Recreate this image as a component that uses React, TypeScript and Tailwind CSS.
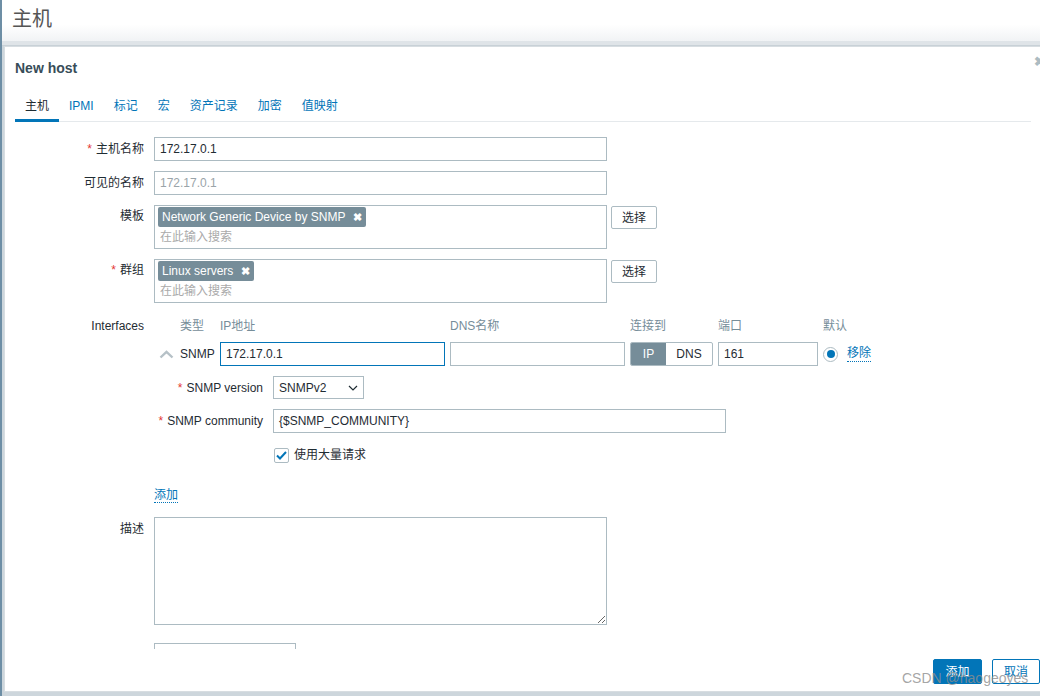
import React from "react";

const font = "font-['Liberation_Sans','Noto_Sans_CJK_SC',sans-serif]";

function Req() {
  return <span className="text-[#e33734] mr-[4px]">*</span>;
}

function Tag({ text }: { text: string }) {
  return (
    <span className="inline-flex items-center h-[20px] px-[4px] rounded-[2px] bg-[#768d99] text-white text-[12px]">
      {text}
      <span className="ml-[8px] text-[11px] font-bold">✖</span>
    </span>
  );
}

function MultiSelect({ tag }: { tag: string }) {
  return (
    <div className="flex items-start gap-[4px]">
      <div className="w-[453px] h-[44px] border border-[#acbbc2] bg-white px-[3px] pt-[1px]">
        <Tag text={tag} />
        <div className="pl-[2px] mt-[2px] leading-[16px] text-[#aaaaaa]">在此输入搜索</div>
      </div>
      <button className="h-[23px] px-[10px] mt-[1px] border border-[#acbbc2] rounded-[2px] bg-white text-[#1f2c33]">
        选择
      </button>
    </div>
  );
}

export default function App() {
  const tabs = ["主机", "IPMI", "标记", "宏", "资产记录", "加密", "值映射"];

  return (
    <div className={`${font} text-[12px] text-[#1f2c33] w-[1040px] h-[696px] overflow-hidden relative bg-[#cdd6dc] border-l-2 border-[#6d8ea5]`}>
      {/* page header */}
      <div className="h-[41px] bg-gradient-to-b from-white from-60% to-[#f1f3f5] pl-[10px] pt-[6px]">
        <h1 className="text-[20px] leading-[26px] text-[#555555] font-normal">主机</h1>
      </div>
      <div className="h-[5px] bg-[#dfe4e8] border-b border-[#c8d1d7]" />

      {/* modal */}
      <div className="ml-[2px] w-[1050px] h-[646px] bg-white border border-[#d7dde1] relative flex flex-col">
        <span className="absolute left-[1029px] top-[5px] text-[#acbbc2] text-[13px] font-bold">✖</span>
        <div className="pl-[10px] pr-[20px] pt-[13px]">
          <h2 className="text-[14px] leading-[16px] font-bold text-[#384d59]">New host</h2>
          <div className="mt-[14px] flex w-[1016px] border-b border-[#e5e9ec]">
            {tabs.map((t, i) => (
              <div
                key={t}
                className={`px-[10px] pt-[9px] pb-[6px] leading-[14px] border-b-[3px] -mb-px ${
                  i === 0 ? "border-[#0275b8] text-[#1f2c33]" : "border-transparent text-[#0275b8]"
                }`}
              >
                {t}
              </div>
            ))}
          </div>
        </div>

        {/* form */}
        <div className="h-[527px] overflow-hidden pl-[10px] pt-[15px]">
          <div className="flex">
            <div className="w-[129px] text-right leading-[24px]"><Req />主机名称</div>
            <div className="ml-[10px] w-[453px] h-[24px] border border-[#acbbc2] px-[5px] leading-[22px]">172.17.0.1</div>
          </div>
          <div className="flex mt-[10px]">
            <div className="w-[129px] text-right leading-[24px]">可见的名称</div>
            <div className="ml-[10px] w-[453px] h-[24px] border border-[#acbbc2] px-[5px] leading-[22px] text-[#9aa4a9]">172.17.0.1</div>
          </div>
          <div className="flex mt-[10px]">
            <div className="w-[129px] text-right leading-[22px]">模板</div>
            <div className="ml-[10px]"><MultiSelect tag="Network Generic Device by SNMP" /></div>
          </div>
          <div className="flex mt-[10px]">
            <div className="w-[129px] text-right leading-[22px]"><Req />群组</div>
            <div className="ml-[10px]"><MultiSelect tag="Linux servers" /></div>
          </div>

          {/* interfaces */}
          <div className="flex mt-[16px]">
            <div className="w-[129px] text-right leading-[14px]">Interfaces</div>
            <div className="ml-[10px]">
              <div className="flex leading-[14px] text-[#768d99]">
                <div className="w-[26px]" />
                <div className="w-[40px]">类型</div>
                <div className="w-[230px]">IP地址</div>
                <div className="w-[180px]">DNS名称</div>
                <div className="w-[88px]">连接到</div>
                <div className="w-[105px]">端口</div>
                <div>默认</div>
              </div>
              <div className="flex items-center mt-[9px] h-[24px]">
                <div className="w-[26px] pl-[5px]">
                  <svg width="15" height="9" viewBox="0 0 15 9" fill="none">
                    <path d="M1.5 7.5 L7.5 1.8 L13.5 7.5" stroke="#b6c1c7" strokeWidth="2.4" />
                  </svg>
                </div>
                <div className="w-[40px]">SNMP</div>
                <div className="w-[225px] h-[24px] border border-[#0275b8] px-[5px] leading-[22px]">172.17.0.1</div>
                <div className="ml-[5px] w-[175px] h-[24px] border border-[#acbbc2]" />
                <div className="ml-[5px] flex h-[24px] border border-[#acbbc2] rounded-[2px] overflow-hidden">
                  <div className="w-[35px] bg-[#768d99] text-white text-center leading-[22px]">IP</div>
                  <div className="w-[46px] text-center leading-[22px]">DNS</div>
                </div>
                <div className="ml-[5px] w-[100px] h-[24px] border border-[#acbbc2] px-[5px] leading-[22px]">161</div>
                <div className="ml-[5px] w-[15px] h-[15px] rounded-full border border-[#acbbc2] flex items-center justify-center">
                  <div className="w-[8px] h-[8px] rounded-full bg-[#0275b8]" />
                </div>
                <span className="ml-[9px] text-[#0275b8] border-b border-dotted border-[#0275b8] leading-[15px]">移除</span>
              </div>

              <div className="flex items-center mt-[10px]">
                <div className="w-[109px] text-right"><Req />SNMP version</div>
                <div className="ml-[10px] w-[91px] h-[23px] border border-[#acbbc2] flex items-center justify-between px-[5px]">
                  <span>SNMPv2</span>
                  <svg width="10" height="6" viewBox="0 0 10 6" fill="none">
                    <path d="M1 1 L5 5 L9 1" stroke="#1f2c33" strokeWidth="1.2" />
                  </svg>
                </div>
              </div>
              <div className="flex items-center mt-[10px]">
                <div className="w-[109px] text-right"><Req />SNMP community</div>
                <div className="ml-[10px] w-[453px] h-[24px] border border-[#acbbc2] px-[5px] leading-[22px]">{"{$SNMP_COMMUNITY}"}</div>
              </div>
              <div className="flex items-center mt-[13px] ml-[120px]">
                <div className="w-[15px] h-[15px] border border-[#acbbc2] rounded-[2px] flex items-center justify-center">
                  <svg width="11" height="9" viewBox="0 0 11 9" fill="none">
                    <path d="M1 4.5 L4 7.5 L10 1" stroke="#0275b8" strokeWidth="2" />
                  </svg>
                </div>
                <span className="ml-[5px]">使用大量请求</span>
              </div>
            </div>
          </div>

          <div className="mt-[22px] ml-[139px]">
            <span className="text-[#0275b8] border-b border-dotted border-[#0275b8] leading-[15px]">添加</span>
          </div>

          <div className="flex mt-[13px]">
            <div className="w-[129px] text-right leading-[24px]">描述</div>
            <textarea className="ml-[10px] w-[453px] h-[108px] border border-[#acbbc2] outline-none" />
          </div>
          <div className="flex mt-[18px]">
            <div className="w-[129px]" />
            <div className="ml-[10px] w-[142px] h-[24px] border border-[#acbbc2]" />
          </div>
        </div>

        {/* footer */}
        <div className="flex pl-[928px] pt-[10px] gap-[10px]">
          <button className="h-[25px] w-[49px] bg-[#0275b8] text-white rounded-[2px] border border-[#0275b8]">添加</button>
          <button className="h-[25px] w-[48px] bg-white text-[#0275b8] rounded-[2px] border border-[#0275b8]">取消</button>
        </div>
      </div>

      <div className="absolute left-[900px] top-[668px] text-[14px] text-[#8e8e8e]/80 font-['Liberation_Sans',sans-serif]">
        CSDN @haogeoyes
      </div>
    </div>
  );
}
